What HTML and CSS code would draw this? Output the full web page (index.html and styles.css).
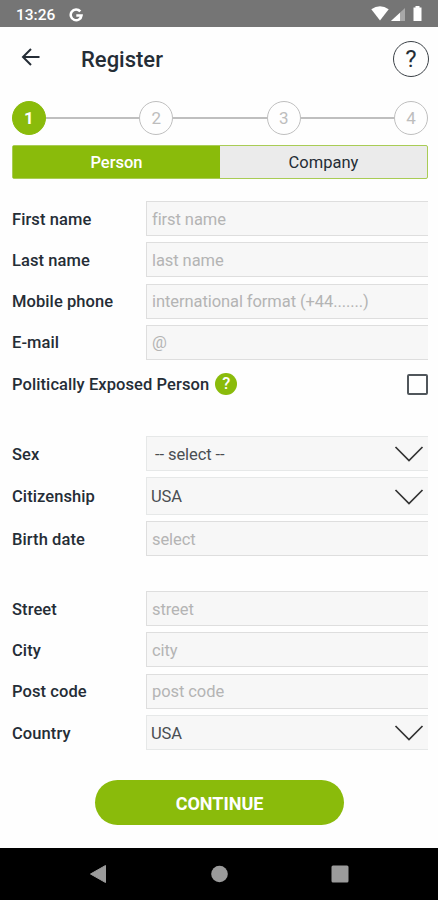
FILE: index.html
```html
<!DOCTYPE html>
<html lang="en">
<head>
<meta charset="utf-8">
<title>Register</title>
<link rel="stylesheet" href="styles.css">
</head>
<body>
<div class="statusbar">
  <span class="time">13:26</span>
  <svg class="google" width="14" height="14" viewBox="0 0 14 14"><path d="M11.3 3.4A5.4 5.4 0 1 0 12.5 7.5H7.3" fill="none" stroke="#fff" stroke-width="2.5"/></svg>
  <svg class="signals" width="54" height="18" viewBox="0 0 54 18"><path d="M1.3 4.2Q10 -1.8 18.7 4.2L10 15.6Z" fill="#fff"/><path d="M35 3V16H21Z" fill="#a8a8a8"/><path d="M30 7.7V16H21Z" fill="#fff"/><path d="M43.500 2.5H45.500V1H49.500V2.500H51.500V16H43.500Z" fill="#fff"/></svg>
</div>
<header class="header">
  <svg class="back" width="20" height="20" viewBox="0 0 20 20"><path d="M18.500 10H2M10 2L2 10L10 18" fill="none" stroke="#252d36" stroke-width="2"/></svg>
  <h1>Register</h1>
  <span class="help">?</span>
</header>
<main>
  <div class="steps">
    <span class="step current">1</span><i></i><span class="step">2</span><i></i><span class="step">3</span><i></i><span class="step">4</span>
  </div>
  <div class="tabs"><span class="tab active">Person</span><span class="tab">Company</span></div>
  <section class="group personal">
    <div class="row"><label>First name</label><div class="field">first name</div></div>
    <div class="row"><label>Last name</label><div class="field">last name</div></div>
    <div class="row"><label>Mobile phone</label><div class="field">international format (+44.......)</div></div>
    <div class="row"><label>E-mail</label><div class="field">@</div></div>
    <div class="pep"><label>Politically Exposed Person</label><span class="hint">?</span><span class="checkbox"></span></div>
  </section>
  <section class="group identity">
    <div class="row"><label>Sex</label><div class="field select unset"><span>-- select --</span><svg width="30" height="18" viewBox="0 0 30 18"><path d="M1.5 2L15 15.5L28.5 2" fill="none" stroke="#333" stroke-width="1.7"/></svg></div></div>
    <div class="row tall"><label>Citizenship</label><div class="field select"><span>USA</span><svg width="30" height="18" viewBox="0 0 30 18"><path d="M1.5 2L15 15.5L28.5 2" fill="none" stroke="#333" stroke-width="1.7"/></svg></div></div>
    <div class="row"><label>Birth date</label><div class="field">select</div></div>
  </section>
  <section class="group address">
    <div class="row"><label>Street</label><div class="field">street</div></div>
    <div class="row"><label>City</label><div class="field">city</div></div>
    <div class="row"><label>Post code</label><div class="field">post code</div></div>
    <div class="row"><label>Country</label><div class="field select"><span>USA</span><svg width="30" height="18" viewBox="0 0 30 18"><path d="M1.5 2L15 15.5L28.5 2" fill="none" stroke="#333" stroke-width="1.7"/></svg></div></div>
  </section>
  <div class="continue">CONTINUE</div>
</main>
<nav class="navbar">
  <svg width="18" height="20" viewBox="0 0 18 20"><path d="M1.5 10L16.5 1.5V18.500Z" fill="#9b9b9b" stroke="#9b9b9b" stroke-linejoin="round"/></svg>
  <svg width="18" height="18" viewBox="0 0 18 18"><circle cx="9.500" cy="9" r="8.300" fill="#9b9b9b"/></svg>
  <svg width="18" height="18" viewBox="0 0 18 18"><rect x=".5" y=".5" width="17" height="17" rx="1.500" fill="#9b9b9b"/></svg>
</nav>
</body>
</html>
```
FILE: styles.css
```css
* { box-sizing: border-box; }
body {
  margin: 0;
  height: 900px;
  display: flex;
  flex-direction: column;
  overflow: hidden;
  background: #fefefe;
  color: #252d36;
  font: 16.5px/20px Roboto, "Liberation Sans", sans-serif;
}
.statusbar {
  height: 27px;
  flex: none;
  display: flex;
  align-items: center;
  padding: 2px 22px 0 16px;
  background: #757575;
  color: #fff;
}
.time { width: 53px; font-size: 15.5px; font-weight: 500; }
.signals { margin: -1px -8px 0 auto; }
.header {
  height: 74px;
  flex: none;
  display: flex;
  align-items: center;
  padding: 0 9px 10px 21px;
}
.back { margin-top: -4px; }
h1 { margin: 2px 0 0 40px; font-size: 22px; line-height: 26px; font-weight: 500; }
.help {
  width: 36px;
  height: 36px;
  margin-left: auto;
  border: 1.5px solid #3b4147;
  border-radius: 50%;
  text-align: center;
  font-size: 24px;
  line-height: 34px;
}
main { flex: 1; padding: 0 10px 0 12px; }
.steps { display: flex; align-items: center; height: 34px; }
.steps i { flex: 1; height: 2px; background: #bfbfbf; }
.step {
  width: 34px;
  height: 34px;
  border: 1.5px solid #bfbfbf;
  border-radius: 50%;
  color: #bdbdbd;
  text-align: center;
  line-height: 33px;
  font-size: 17px;
}
.step.current { background: #8abb0b; border-color: #8abb0b; color: #fff; font-weight: 700; }
.tabs {
  display: grid;
  grid-template-columns: 207px 1fr;
  height: 34px;
  margin: 10px 0 22px;
  border: 1px solid #a9cc55;
  border-radius: 2px;
  background: #ebebeb;
}
.tab { height: 32px; padding-top: 7px; text-align: center; }
.tab.active { background: #8abb0b; color: #fff; font-weight: 500; }
.group { display: flex; flex-direction: column; }
.personal { gap: 6.300px; margin-bottom: 34px; }
.identity { gap: 6px; margin-bottom: 35px; }
.address { gap: 6.300px; margin-bottom: 30px; }
.row { display: grid; grid-template-columns: 134px 1fr; align-items: center; height: 35px; }
.row.tall { height: 38px; }
label { padding-top: 2px; font-weight: 500; letter-spacing: .08px; }
.field {
  height: 100%;
  display: flex;
  align-items: center;
  padding: 2px 0 0 5px;
  border: solid #dedede;
  border-width: 1px 0 1px 1px;
  background: #f7f7f7;
  color: #b4b4b4;
  letter-spacing: -.08px;
}
.select {
  justify-content: space-between;
  padding: 2px 4px 0 4px;
  border-color: #e6e8e8;
  color: #4a4e52;
}
.select svg { margin-top: -1px; }
.unset { padding-left: 8px; }
.pep { display: flex; align-items: center; height: 36px; }
.hint {
  width: 22px;
  height: 22px;
  margin-left: 6px;
  border-radius: 50%;
  background: #8abb0b;
  color: #fff;
  text-align: center;
  line-height: 22px;
  font-weight: 500;
}
.checkbox { width: 21px; height: 21px; margin-left: auto; border: 2px solid #50565b; border-radius: 2px; }
.continue {
  width: 249px;
  height: 45px;
  margin-left: 83px;
  border-radius: 23px;
  background: #8abb0b;
  color: #fff;
  text-align: center;
  font-size: 18px;
  line-height: 47px;
  font-weight: 700;
}
.navbar {
  height: 52px;
  flex: none;
  display: flex;
  align-items: center;
  justify-content: space-between;
  padding: 0 89px;
  background: #000;
}
```
